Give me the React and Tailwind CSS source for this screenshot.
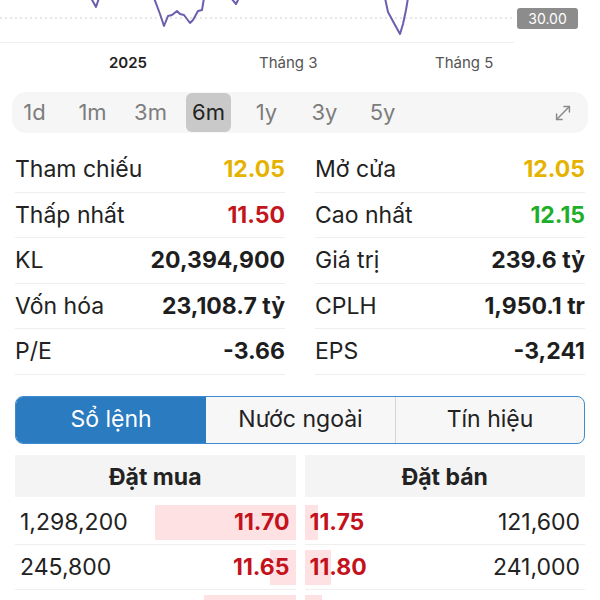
import { MoveDiagonal } from "lucide-react";

const ranges = ["1d", "1m", "3m", "6m", "1y", "3y", "5y"];

const stats = [
  [
    { label: "Tham chiếu", value: "12.05", color: "text-[#e6b200]" },
    { label: "Mở cửa", value: "12.05", color: "text-[#e6b200]" },
  ],
  [
    { label: "Thấp nhất", value: "11.50", color: "text-[#c3161c]" },
    { label: "Cao nhất", value: "12.15", color: "text-[#1fae2c]" },
  ],
  [
    { label: "KL", value: "20,394,900" },
    { label: "Giá trị", value: "239.6 tỷ" },
  ],
  [
    { label: "Vốn hóa", value: "23,108.7 tỷ" },
    { label: "CPLH", value: "1,950.1 tr" },
  ],
  [
    { label: "P/E", value: "-3.66" },
    { label: "EPS", value: "-3,241" },
  ],
];

const orders = [
  { buyVol: "1,298,200", buy: "11.70", buyBar: 141, sell: "11.75", sellBar: 13, sellVol: "121,600" },
  { buyVol: "245,800", buy: "11.65", buyBar: 26, sell: "11.80", sellBar: 26, sellVol: "241,000" },
  { buyVol: "", buy: "", buyBar: 92, sell: "", sellBar: 17, sellVol: "" },
];

function Chart() {
  return (
    <div className="relative h-[45px]">
      <svg width="600" height="45" className="block">
        <line x1="0" y1="18" x2="514" y2="18" stroke="#cfcfcf" strokeWidth="1" strokeDasharray="2 3" />
        <line x1="0" y1="42.5" x2="514" y2="42.5" stroke="#efefef" strokeWidth="1" />
        <g fill="none" stroke="#6a5fae" strokeWidth="2" strokeLinejoin="round" strokeLinecap="round">
          <polyline points="91,-2 96,7 99,-2" />
          <polyline points="154,-2 160,14 164,26 168,16 172,15 177,11 180,14 184,15 190,23 193,20 198,11 202,10 204,-2" />
          <polyline points="231,-2 236,4 239,-2" />
          <polyline points="385,-2 388,12 395,25 400,34 403,24 406,10 408,-2" />
        </g>
      </svg>
      <div className="absolute left-[517px] top-[8px] w-[61px] h-[21px] rounded-[3px] bg-[#8c8c8c] text-white text-[14px] leading-[21px] text-center">
        30.00
      </div>
    </div>
  );
}

function Axis() {
  return (
    <div className="relative h-[35px] text-[15px] text-[#555]">
      <span className="absolute left-[109px] top-[7px] font-semibold text-[#222]">2025</span>
      <span className="absolute left-[259px] top-[7px]">Tháng 3</span>
      <span className="absolute left-[435px] top-[7px]">Tháng 5</span>
    </div>
  );
}

function RangeBar() {
  return (
    <div className="mx-[12px] mt-[12px] h-[41px] rounded-[14px] bg-[#f6f6f6] flex items-center">
      <div className="flex gap-[13px] items-center">
        {ranges.map((r) => (
          <div
            key={r}
            className={
              r === "6m"
                ? "w-[45px] h-[39px] rounded-[6px] bg-[#c9c9c9] text-[#222] flex items-center justify-center text-[22px]"
                : "w-[45px] h-[39px] text-[#7d7d7d] flex items-center justify-center text-[22px]"
            }
          >
            {r}
          </div>
        ))}
      </div>
      <MoveDiagonal className="ml-auto mr-[14px] text-[#8a8a8a]" size={22} strokeWidth={1.6} />
    </div>
  );
}

function Stats() {
  return (
    <div className="mt-[14px] px-[15px] grid grid-cols-2 gap-x-[30px]">
      {stats.flat().map((s, i) => (
        <div key={i} className="h-[45.5px] border-b border-[#eeeeee] flex items-center justify-between text-[23px]">
          <span className="text-[#222]">{s.label}</span>
          <span className={"font-bold " + (s.color || "text-[#1e1e1e]")}>{s.value}</span>
        </div>
      ))}
    </div>
  );
}

function Segments() {
  return (
    <div className="mx-[15px] mt-[21px] h-[48px] rounded-[8px] border border-[#3f8ad0] bg-[#f7f7f7] flex overflow-hidden text-[23px]">
      <div className="w-[190px] bg-[#2a7bbf] text-white flex items-center justify-center">Sổ lệnh</div>
      <div className="w-[190px] border-r border-[#cfd6dd] text-[#222] flex items-center justify-center">Nước ngoài</div>
      <div className="flex-1 text-[#222] flex items-center justify-center">Tín hiệu</div>
    </div>
  );
}

function OrderBook() {
  return (
    <div className="mt-[11px] px-[15px] grid grid-cols-2 gap-x-[9px]">
      <div className="h-[42px] pt-[3px] bg-[#f4f4f4] flex items-center justify-center text-[23px] font-bold text-[#222]">Đặt mua</div>
      <div className="h-[42px] pt-[3px] bg-[#f4f4f4] flex items-center justify-center text-[23px] font-bold text-[#222]">Đặt bán</div>
      <div className="h-[3px] col-span-2" />
      {orders.map((o, i) => [
        <div key={"b" + i} className="h-[45px] border-b border-[#eeeeee] py-[5px] text-[23px]">
          <div className="relative h-[35px] flex items-center justify-between">
            <div className="absolute right-0 top-0 h-[35px] bg-[#fde1e3]" style={{ width: o.buyBar }} />
            <span className="relative pl-[5px] text-[#222]">{o.buyVol}</span>
            <span className="relative pr-[6px] font-bold text-[#c4121c]">{o.buy}</span>
          </div>
        </div>,
        <div key={"s" + i} className="h-[45px] border-b border-[#eeeeee] py-[5px] text-[23px]">
          <div className="relative h-[35px] flex items-center justify-between">
            <div className="absolute left-0 top-0 h-[35px] bg-[#fde1e3]" style={{ width: o.sellBar }} />
            <span className="relative pl-[5px] font-bold text-[#c4121c]">{o.sell}</span>
            <span className="relative pr-[5px] text-[#222]">{o.sellVol}</span>
          </div>
        </div>,
      ])}
    </div>
  );
}

export default function App() {
  return (
    <div className="w-[600px] h-[600px] overflow-hidden bg-white font-['Inter',sans-serif]">
      <Chart />
      <Axis />
      <RangeBar />
      <Stats />
      <Segments />
      <OrderBook />
    </div>
  );
}
